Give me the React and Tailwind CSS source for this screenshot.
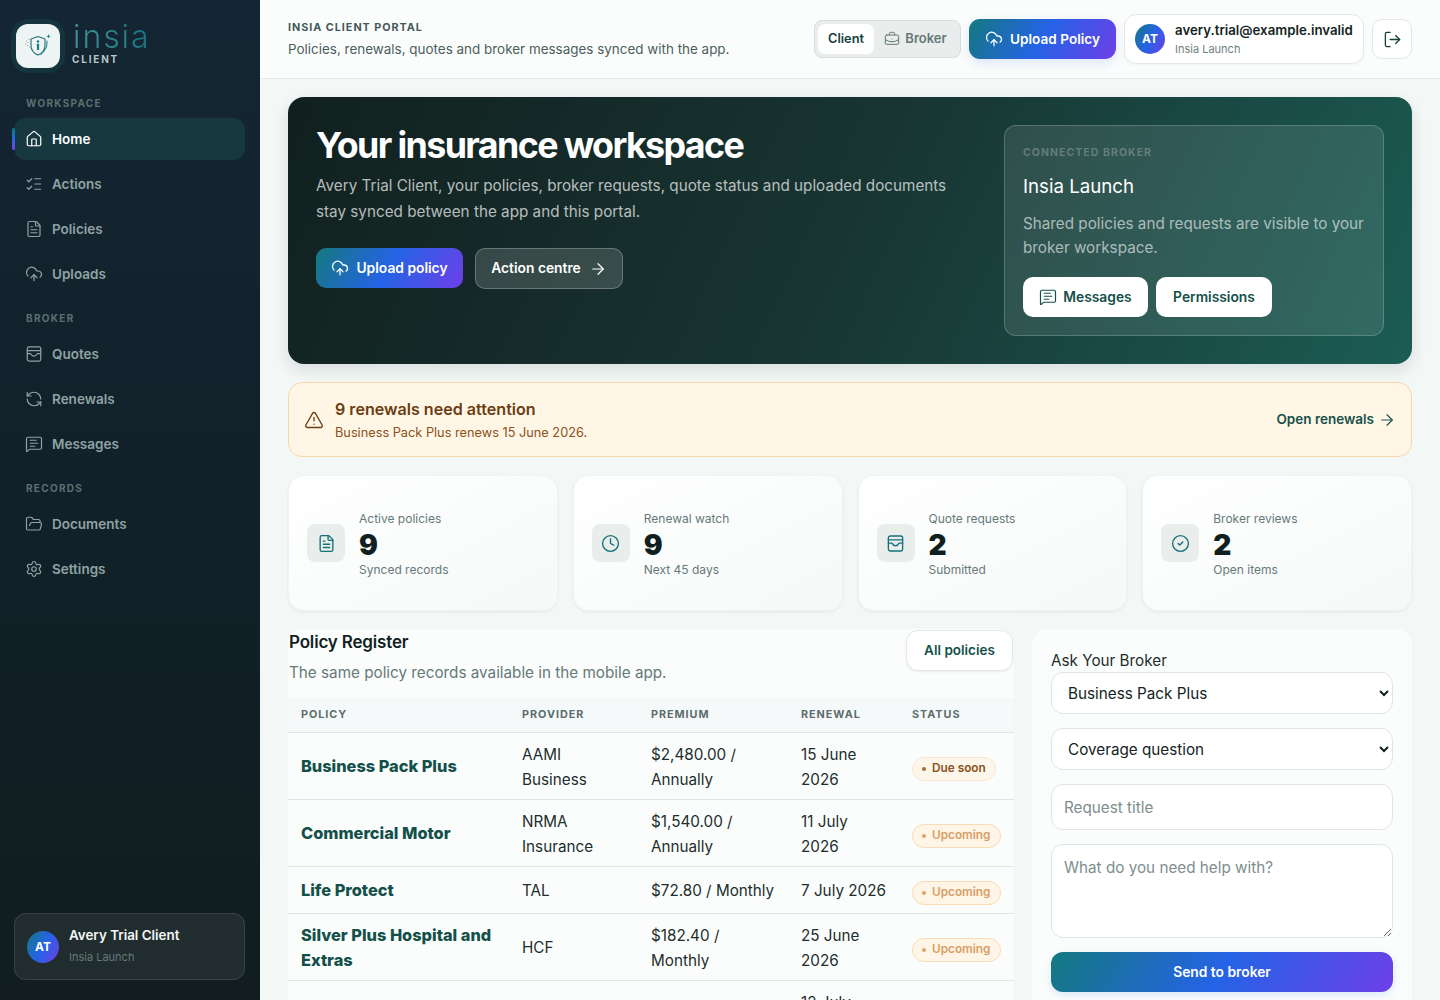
import React from "react";
import {
  ArrowRight,
  BriefcaseBusiness,
  CircleCheck,
  Clock,
  CloudUpload,
  FileText,
  FolderOpen,
  House,
  ListChecks,
  LogOut,
  MessageSquareText,
  RefreshCcw,
  Settings,
  TriangleAlert,
} from "lucide-react";

const InboxIcon = ({ size = 16, strokeWidth = 2, className = "" }) => (
  <svg
    width={size}
    height={size}
    viewBox="0 0 24 24"
    fill="none"
    stroke="currentColor"
    strokeWidth={strokeWidth}
    strokeLinecap="round"
    strokeLinejoin="round"
    className={className}
  >
    <rect x="3" y="2.500" width="18" height="19" rx="2.500" />
    <path d="M3 7.500h18" />
    <path d="M3 11.500h4.500c1 2.200 2.600 3.300 4.500 3.300s3.500-1.100 4.500-3.300H21" />
  </svg>
);

const navGroups = [
  {
    label: "WORKSPACE",
    items: [
      { name: "Home", icon: House, active: true },
      { name: "Actions", icon: ListChecks },
      { name: "Policies", icon: FileText },
      { name: "Uploads", icon: CloudUpload },
    ],
  },
  {
    label: "BROKER",
    items: [
      { name: "Quotes", icon: InboxIcon },
      { name: "Renewals", icon: RefreshCcw },
      { name: "Messages", icon: MessageSquareText },
    ],
  },
  {
    label: "RECORDS",
    items: [
      { name: "Documents", icon: FolderOpen },
      { name: "Settings", icon: Settings },
    ],
  },
];

const stats = [
  { label: "Active policies", value: "9", sub: "Synced records", icon: FileText },
  { label: "Renewal watch", value: "9", sub: "Next 45 days", icon: Clock },
  { label: "Quote requests", value: "2", sub: "Submitted", icon: InboxIcon },
  { label: "Broker reviews", value: "2", sub: "Open items", icon: CircleCheck },
];

const policies = [
  { name: "Business Pack Plus", provider: "AAMI Business", premium: "$2,480.00 / Annually", renewal: "15 June 2026", status: "Due soon" },
  { name: "Commercial Motor", provider: "NRMA Insurance", premium: "$1,540.00 / Annually", renewal: "11 July 2026", status: "Upcoming" },
  { name: "Life Protect", provider: "TAL", premium: "$72.80 / Monthly", renewal: "7 July 2026", status: "Upcoming" },
  { name: "Silver Plus Hospital and Extras", provider: "HCF", premium: "$182.40 / Monthly", renewal: "25 June 2026", status: "Upcoming" },
  { name: "Cyber Cover", provider: "QBE", premium: "$96.50 / Monthly", renewal: "12 July 2026", status: "Upcoming" },
];

const brandGradient = "bg-linear-[120deg] from-[#14797f] via-[#2563e6] to-[#6d3fe8]";

const Logo = () => (
  <div className="flex items-start gap-[13px] pl-[2px]">
    <div className="flex h-[44px] w-[44px] items-center justify-center rounded-[12px] bg-[#eef4f3] shadow-[0_0_0_5px_rgba(24,80,84,0.35)]">
      <svg width="30" height="30" viewBox="0 0 30 30" fill="none">
        <path
          d="M15 5.500l7 2.400v6.600c0 4.500-2.900 7.800-7 9.600-4.100-1.800-7-5.100-7-9.600V7.900z"
          stroke="#1d6f78"
          strokeWidth="1.100"
          strokeLinejoin="round"
        />
        <circle cx="15" cy="10.500" r="1.300" fill="#16808a" />
        <rect x="13.900" y="12.700" width="2.200" height="6.300" rx="0.500" fill="#16808a" />
        <path d="M24 10c.5 6-2.500 10.500-6 13.500" stroke="#16808a" strokeWidth="1" strokeLinecap="round" />
        <path d="M25.500 3l.6 1.700 1.700.6-1.700.6-.6 1.700-.6-1.700-1.700-.6 1.700-.6z" fill="#16808a" />
        <g fill="#7d9498">
          <circle cx="3.500" cy="10" r="0.600" />
          <circle cx="6" cy="8.500" r="0.600" />
          <circle cx="2.500" cy="13" r="0.600" />
          <circle cx="5" cy="11.500" r="0.600" />
          <circle cx="4.500" cy="14.500" r="0.600" />
          <circle cx="6.500" cy="16" r="0.600" />
        </g>
      </svg>
    </div>
    <div className="flex flex-col">
      <span className="-mt-[3px] bg-gradient-to-r from-[#3f8f96] to-[#14757d] bg-clip-text text-[32px] leading-[32px] font-light tracking-[0.06em] text-transparent">
        insia
      </span>
      <span className="-ml-[1px] text-[10px] leading-[13px] font-bold tracking-[0.18em] text-[#b7c6c6]">CLIENT</span>
    </div>
  </div>
);

const Sidebar = () => (
  <aside className="flex h-full w-[260px] shrink-0 flex-col bg-gradient-to-b from-[#142633] via-[#11212a] to-[#111d1e] pt-[24px] pr-[15px] pb-[20px] pl-[14px]">
    <Logo />
    <nav className="mt-[28px] flex flex-col gap-[16px]">
      {navGroups.map((group) => (
        <div key={group.label} className="flex flex-col">
          <p className="mb-[7px] px-[12px] text-[10px] leading-[15px] font-bold tracking-[0.13em] text-[#5c7070]">{group.label}</p>
          <div className="flex flex-col gap-[3px]">
            {group.items.map((item) => {
              const Icon = item.icon;
              return (
                <div
                  key={item.name}
                  className={`relative flex h-[42px] items-center gap-[9px] rounded-[12px] px-[11px] text-[13.500px] font-semibold ${
                    item.active ? "bg-[#18383f] text-white" : "text-[#8fa3a3]"
                  }`}
                >
                  {item.active && (
                    <span className="absolute top-[10px] -left-[2px] h-[22px] w-[3px] rounded-full bg-gradient-to-b from-[#14797f] via-[#2563e6] to-[#6d3fe8]" />
                  )}
                  <Icon size={18} strokeWidth={1.600} className="shrink-0" />
                  {item.name}
                </div>
              );
            })}
          </div>
        </div>
      ))}
    </nav>
    <div className="mt-auto flex h-[67px] items-center gap-[10px] rounded-[12px] border border-white/10 bg-white/[0.07] px-[12px]">
      <div className={`flex h-[32px] w-[32px] items-center justify-center rounded-full ${brandGradient} text-[12px] font-bold text-white`}>AT</div>
      <div className="mb-[2px] flex flex-col gap-[7px]">
        <span className="text-[13.400px] leading-[16px] font-semibold text-[#f2f6f6]">Avery Trial Client</span>
        <span className="text-[11px] leading-[14px] text-[#667a7a]">Insia Launch</span>
      </div>
    </div>
  </aside>
);

const Header = () => (
  <header className="flex h-[79px] shrink-0 items-center justify-between border-b border-[#e6ecea] bg-[#fbfdfc] pr-[28px] pl-[28px]">
    <div className="flex flex-col gap-[5px]">
      <p className="text-[10.800px] leading-[14px] font-bold tracking-[0.09em] text-[#45595a]">INSIA CLIENT PORTAL</p>
      <p className="text-[13.450px] leading-[18px] text-[#4c5e5e]">Policies, renewals, quotes and broker messages synced with the app.</p>
    </div>
    <div className="flex items-center gap-[8px]">
      <div className="flex h-[38px] w-[147px] items-center rounded-[8px] border border-[#d5dedc] bg-[#e9eeed] p-[3px]">
        <div className="flex h-[30px] w-[56px] items-center justify-center rounded-[7px] bg-white text-[12.800px] font-semibold text-[#14403c]">Client</div>
        <div className="flex flex-1 items-center justify-center gap-[5px] text-[13px] font-semibold text-[#657878]">
          <BriefcaseBusiness size={16} strokeWidth={1.500} />
          Broker
        </div>
      </div>
      <button className={`flex h-[40px] w-[147px] items-center justify-center gap-[7px] rounded-[11px] ${brandGradient} text-[13.600px] font-semibold text-white shadow-[0_4px_12px_rgba(37,99,230,0.15)]`}>
        <CloudUpload size={18} strokeWidth={1.700} />
        Upload Policy
      </button>
      <div className="flex h-[50px] w-[240px] items-center gap-[10px] rounded-[12px] border border-[#e2e9e7] bg-white pl-[10px] shadow-[0_1px_3px_rgba(20,50,50,0.05)]">
        <div className={`flex h-[30px] w-[30px] shrink-0 items-center justify-center rounded-full ${brandGradient} text-[12px] font-bold text-white`}>AT</div>
        <div className="flex flex-col gap-[4px]">
          <span className="text-[13.250px] leading-[16px] font-semibold whitespace-nowrap text-[#142423]">avery.trial@example.invalid</span>
          <span className="text-[11px] leading-[14px] text-[#6f8080]">Insia Launch</span>
        </div>
      </div>
      <button className="flex h-[40px] w-[40px] items-center justify-center rounded-[10px] border border-[#e2e9e7] bg-white text-[#14403c]">
        <LogOut size={19} strokeWidth={1.600} />
      </button>
    </div>
  </header>
);

const Hero = () => (
  <section className="flex h-[267px] shrink-0 justify-between rounded-[16px] bg-linear-[115deg] from-[#11201f] via-[#183532] to-[#1b5c54] p-[28px] shadow-[0_6px_16px_rgba(20,50,50,0.12)]">
    <div className="w-[650px]">
      <h1 className="text-[35.800px] leading-[40px] font-bold tracking-[-0.045em] text-white">Your insurance workspace</h1>
      <p className="mt-[8px] text-[15.250px] leading-[26px] text-white/70">
        Avery Trial Client, your policies, broker requests, quote status and uploaded documents stay synced between the app and this portal.
      </p>
      <div className="mt-[23px] flex gap-[12px]">
        <button className={`flex h-[40px] w-[147px] items-center justify-center gap-[7px] rounded-[10px] ${brandGradient} text-[13.800px] font-semibold text-white`}>
          <CloudUpload size={18} strokeWidth={1.700} />
          Upload policy
        </button>
        <button className="flex h-[41px] w-[148px] items-center justify-center gap-[8px] rounded-[10px] border border-white/25 bg-white/15 text-[13.800px] font-semibold text-white">
          Action centre
          <ArrowRight size={18} strokeWidth={1.600} />
        </button>
      </div>
    </div>
    <div className="h-[211px] w-[380px] rounded-[12px] border border-white/20 bg-white/10 px-[18px] pt-[19px]">
      <p className="text-[10.500px] leading-[16px] font-bold tracking-[0.1em] text-white/25">CONNECTED BROKER</p>
      <p className="mt-[12px] text-[18.700px] leading-[28px] text-white">Insia Launch</p>
      <p className="mt-[11px] text-[15.250px] leading-[24px] text-white/60">Shared policies and requests are visible to your broker workspace.</p>
      <div className="mt-[17px] flex gap-[8px]">
        <button className="flex h-[40px] w-[125px] items-center justify-center gap-[6px] rounded-[10px] bg-white text-[13.800px] font-semibold text-[#14504a]">
          <MessageSquareText size={18} strokeWidth={1.600} />
          Messages
        </button>
        <button className="flex h-[40px] w-[116px] items-center justify-center rounded-[10px] bg-white text-[13.800px] font-semibold text-[#14504a]">Permissions</button>
      </div>
    </div>
  </section>
);

const RenewalAlert = () => (
  <section className="flex h-[75px] shrink-0 items-center rounded-[14px] border border-[#f6d7ab] bg-[#fff6e6] pr-[15px] pl-[15px]">
    <TriangleAlert size={20} strokeWidth={1.600} className="text-[#6b3d12]" />
    <div className="ml-[11px] flex flex-col gap-[6px]">
      <p className="text-[16.100px] leading-[20px] font-semibold text-[#6b3d12]">9 renewals need attention</p>
      <p className="text-[12.750px] leading-[16px] text-[#8a5220]">Business Pack Plus renews 15 June 2026.</p>
    </div>
    <a className="ml-auto flex items-center gap-[4px] text-[13.500px] font-semibold text-[#14504a]">
      Open renewals
      <ArrowRight size={18} strokeWidth={1.500} />
    </a>
  </section>
);

const StatCard = ({ stat }) => {
  const Icon = stat.icon;
  return (
    <div className="flex h-[136px] items-center gap-[14px] rounded-[16px] border border-[#f0f4f3] bg-gradient-to-br from-white to-[#f6f9f9] p-[18px] shadow-[0_1px_3px_rgba(20,50,50,0.07)]">
      <div className="flex h-[38px] w-[38px] items-center justify-center rounded-[8px] bg-[#e9eeed] text-[#176f7a]">
        <Icon size={19} strokeWidth={1.700} />
      </div>
      <div className="flex flex-col pt-[2px]">
        <span className="text-[12px] leading-[16px] text-[#66797a]">{stat.label}</span>
        <span className="mt-[2px] text-[28px] leading-[32px] font-black text-[#111f1f]">{stat.value}</span>
        <span className="mt-[1px] text-[12px] leading-[16px] text-[#66797a]">{stat.sub}</span>
      </div>
    </div>
  );
};

const StatusPill = ({ status }) => {
  const due = status === "Due soon";
  return (
    <span
      className={`inline-flex h-[24px] items-center gap-[6px] rounded-full border pr-[6px] pl-[9px] text-[11.800px] font-semibold whitespace-nowrap ${
        due ? "w-[84px] border-[#f8e6cf] bg-[#fdf6ea] text-[#8a5220]" : "w-[89px] border-[#f8dcb6] bg-[#fff5e6] text-[#d9a066]"
      }`}
    >
      <span className={`h-[4px] w-[4px] shrink-0 rounded-full ${due ? "bg-[#a9692f]" : "bg-[#dca56d]"}`} />
      {status}
    </span>
  );
};

const PolicyRegister = () => (
  <section className="min-w-0 flex-1 rounded-[14px] bg-[#fbfdfc]">
    <div className="flex h-[69px] items-start justify-between pt-[1px] pl-[1px]">
      <div>
        <h2 className="mt-[1px] text-[17px] leading-[22px] font-semibold tracking-[-0.01em] text-[#111f1f]">Policy Register</h2>
        <p className="mt-[9px] text-[15.250px] leading-[22px] text-[#66797a]">The same policy records available in the mobile app.</p>
      </div>
      <button className="mr-[1px] flex h-[41px] w-[107px] items-center justify-center rounded-[12px] border border-[#e2e9e7] bg-white text-[13.500px] font-semibold text-[#14504a] shadow-[0_1px_2px_rgba(20,50,50,0.08)]">
        All policies
      </button>
    </div>
    <table className="w-full table-fixed border-collapse text-left text-[15.250px] leading-[25px] text-[#1d2e2d]">
      <thead>
        <tr className="h-[34px] border-b border-[#dfe6e5] bg-[#f6f9f9] text-[10.800px] font-bold tracking-[0.09em] text-[#5b6d6d]">
          <th className="w-[222px] px-[13px] font-bold">POLICY</th>
          <th className="w-[129px] px-[12px] font-bold">PROVIDER</th>
          <th className="w-[150px] px-[12px] font-bold">PREMIUM</th>
          <th className="w-[111px] px-[12px] font-bold">RENEWAL</th>
          <th className="px-[12px] font-bold">STATUS</th>
        </tr>
      </thead>
      <tbody>
        {policies.map((policy) => (
          <tr key={policy.name} className="border-b border-[#dfe6e5]">
            <td className="h-[47px] px-[13px] pt-[9px] pb-[7px] text-[16.350px] font-extrabold text-[#14504a]">{policy.name}</td>
            <td className="px-[12px] pt-[9px] pb-[7px]">{policy.provider}</td>
            <td className="px-[12px] pt-[9px] pb-[7px]">{policy.premium}</td>
            <td className="px-[12px] pt-[9px] pb-[7px]">{policy.renewal}</td>
            <td className="px-[12px] pt-[9px] pb-[7px]">
              <StatusPill status={policy.status} />
            </td>
          </tr>
        ))}
      </tbody>
    </table>
  </section>
);

const AskBroker = () => (
  <section className="w-[380px] shrink-0 self-start rounded-[16px] bg-[#fbfdfc] px-[19px] pt-[20px] pb-[24px]">
    <form className="flex flex-col">
      <label className="text-[15.250px] leading-[23px] text-[#1d2e2d]">Ask Your Broker</label>
      <div className="flex flex-col gap-[14px]">
        <select className="h-[42px] w-full rounded-[12px] border border-[#dfe6e5] bg-white px-[12px] text-[15.250px] text-[#142423]">
          <option>Business Pack Plus</option>
        </select>
        <select className="h-[42px] w-full rounded-[12px] border border-[#dfe6e5] bg-white px-[12px] text-[15.250px] text-[#142423]">
          <option>Coverage question</option>
        </select>
        <input
          placeholder="Request title"
          className="h-[46px] w-full rounded-[12px] border border-[#dfe6e5] bg-white px-[12px] text-[15.250px] outline-none placeholder:text-[#7d8e8e]"
        />
        <textarea
          placeholder="What do you need help with?"
          className="block h-[94px] w-full rounded-[12px] border border-[#dfe6e5] bg-white px-[12px] py-[11px] text-[15.250px] leading-[24px] outline-none placeholder:text-[#7d8e8e]"
        />
        <button type="button" className={`h-[40px] w-full rounded-[12px] ${brandGradient} text-[13.800px] font-semibold text-white shadow-[0_3px_8px_rgba(37,99,230,0.15)]`}>
          Send to broker
        </button>
      </div>
    </form>
  </section>
);

export default function App() {
  return (
    <div className="flex h-screen overflow-hidden bg-[#f3f7f6] font-['Inter',sans-serif]">
      <Sidebar />
      <div className="flex min-w-0 flex-1 flex-col">
        <Header />
        <main className="flex flex-1 flex-col gap-[18px] overflow-hidden px-[28px] pt-[18px]">
          <Hero />
          <RenewalAlert />
          <div className="grid shrink-0 grid-cols-4 gap-[15px]">
            {stats.map((stat) => (
              <StatCard key={stat.label} stat={stat} />
            ))}
          </div>
          <div className="flex shrink-0 items-start gap-[18px]">
            <PolicyRegister />
            <AskBroker />
          </div>
        </main>
      </div>
    </div>
  );
}
